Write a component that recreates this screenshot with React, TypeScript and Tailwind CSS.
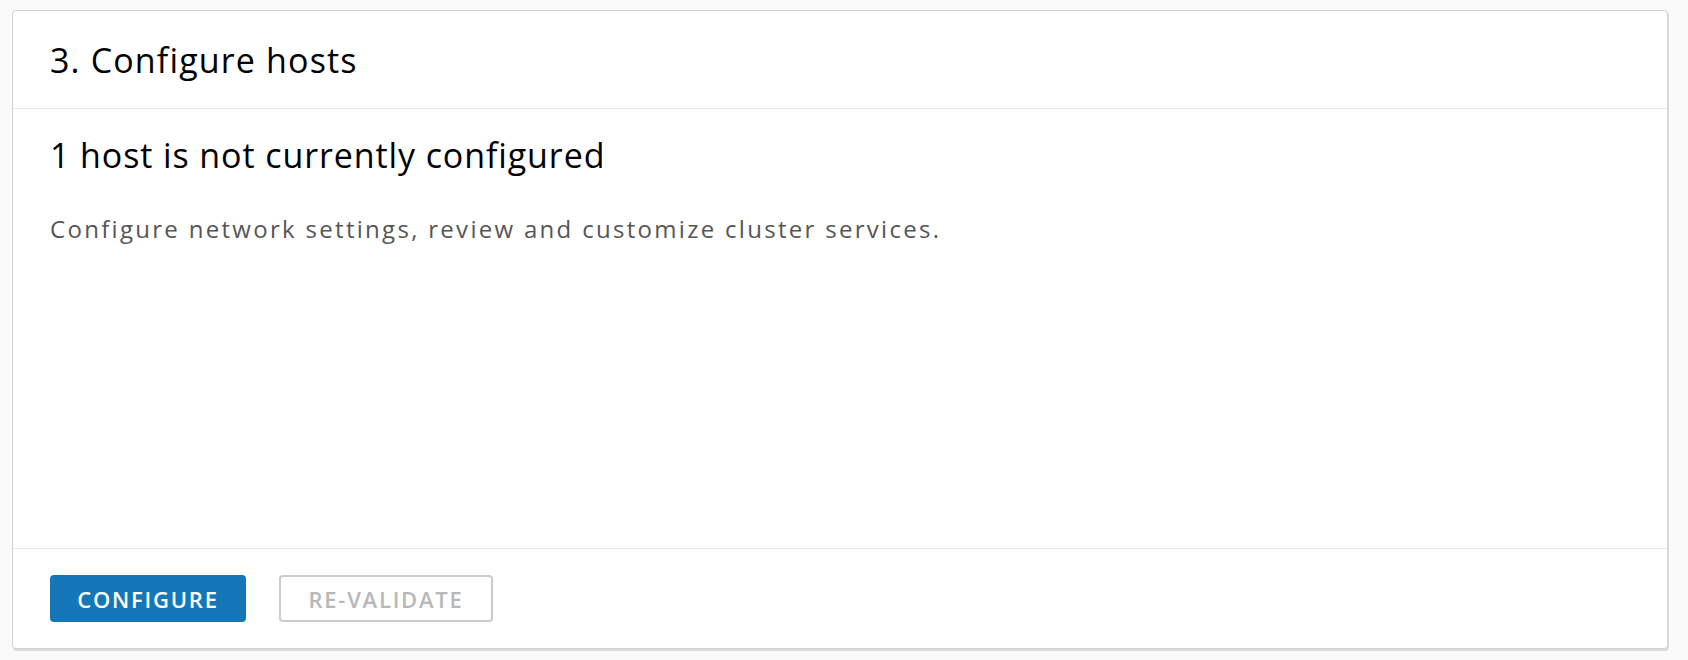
import React from 'react';

const App: React.FC = () => {
  return (
    <div
      className="min-h-[660px] bg-[#fafafa] pt-[10px] pl-[12px] pr-[20px] pb-[10px]"
      style={{ fontFamily: '"Open Sans", Lato, sans-serif' }}
    >
      <div className="flex h-[639px] flex-col rounded-[4px] border border-[#d4d4d4] bg-white shadow-[1px_2px_0_0_#dadada]">
        {/* Header */}
        <div className="flex h-[98px] items-center border-b border-[#e8e8e8] px-[37px]">
          <h2 className="text-[34px] leading-none tracking-[1.15px] text-black">3. Configure hosts</h2>
        </div>

        {/* Body */}
        <div className="flex-1 px-[37px] pt-[26px]">
          <h3 className="text-[34px] leading-[40px] tracking-[0.9px] text-black">
            1 host is not currently configured
          </h3>
          <p className="mt-[38px] text-[24px] leading-[32px] tracking-[2.3px] text-[#565656]">
            Configure network settings, review and customize cluster services.
          </p>
        </div>

        {/* Footer */}
        <div className="flex h-[100px] items-center gap-[33px] border-t border-[#e8e8e8] px-[37px]">
          <button className="h-[47px] w-[196px] rounded-[4px] bg-[#1677b8] pt-[2px] text-[22px] font-semibold tracking-[0.08em] text-white">
            CONFIGURE
          </button>
          <button className="h-[47px] w-[214px] rounded-[4px] border-2 border-[#cccccc] bg-white pt-[2px] text-[22px] font-semibold tracking-[0.08em] text-[#b8b8b8]">
            RE-VALIDATE
          </button>
        </div>
      </div>
    </div>
  );
};

export default App;
